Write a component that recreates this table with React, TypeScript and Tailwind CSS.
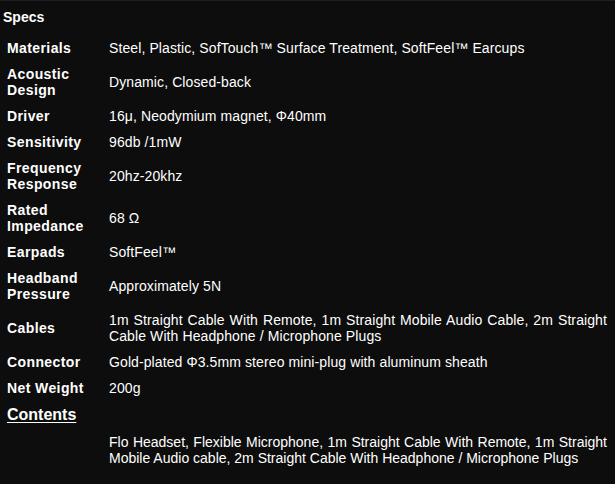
import React from "react";

interface SpecRow {
  label: string;
  value: string;
}

const specs: SpecRow[] = [
  { label: "Materials", value: "Steel, Plastic, SofTouch™ Surface Treatment, SoftFeel™ Earcups" },
  { label: "Acoustic Design", value: "Dynamic, Closed-back" },
  { label: "Driver", value: "16μ, Neodymium magnet, Φ40mm" },
  { label: "Sensitivity", value: "96db /1mW" },
  { label: "Frequency Response", value: "20hz-20khz" },
  { label: "Rated Impedance", value: "68 Ω" },
  { label: "Earpads", value: "SoftFeel™" },
  { label: "Headband Pressure", value: "Approximately 5N" },
  {
    label: "Cables",
    value:
      "1m Straight Cable With Remote, 1m Straight Mobile Audio Cable, 2m Straight Cable With Headphone / Microphone Plugs",
  },
  { label: "Connector", value: "Gold-plated Φ3.5mm stereo mini-plug with aluminum sheath" },
  { label: "Net Weight", value: "200g" },
];

const App: React.FC = () => {
  return (
    <div className="min-h-screen bg-[#0d0d0d] border-t border-[#1e1e1e] text-white font-['Liberation_Sans',Arial,sans-serif] text-[14px] leading-[16px]">
      <div className="pt-[8px] pl-[3px] font-bold">Specs</div>

      {/* Spec table */}
      <div className="mt-[10px] grid grid-cols-[102px_1fr] items-center pl-[7px] pr-[8px]">
        {specs.map((row) => (
          <React.Fragment key={row.label}>
            <div className="py-[5px] font-bold tracking-[0.4px] pr-2">{row.label}</div>
            <div className="py-[5px] text-justify tracking-[0.1px]">{row.value}</div>
          </React.Fragment>
        ))}

        <div className="col-span-2 py-[5px] text-[16px] leading-[18px] font-bold underline underline-offset-[2px]">
          Contents
        </div>
        <div className="py-[5px]"></div>
        <div className="py-[5px] text-justify">
          Flo Headset, Flexible Microphone, 1m Straight Cable With Remote, 1m Straight Mobile Audio cable, 2m
          Straight Cable With Headphone / Microphone Plugs
        </div>
      </div>
    </div>
  );
};

export default App;
